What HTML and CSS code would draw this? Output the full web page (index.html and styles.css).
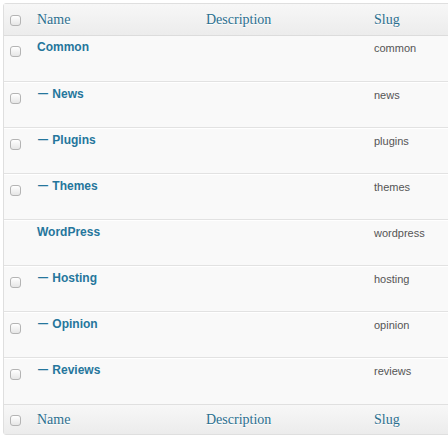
FILE: index.html
```html
<!DOCTYPE html>
<html>
<head>
<meta charset="utf-8">
<link rel="stylesheet" href="styles.css">
</head>
<body>
<div class="wrap">
<table class="list">
  <colgroup>
    <col class="c-cb"><col class="c-name"><col class="c-desc"><col class="c-slug">
  </colgroup>
  <thead>
    <tr><th class="cb"><span class="box"></span></th><th>Name</th><th>Description</th><th>Slug</th></tr>
  </thead>
  <tbody>
    <tr><td class="cb"><span class="box"></span></td><td class="name">Common</td><td></td><td class="slug">common</td></tr>
    <tr><td class="cb"><span class="box"></span></td><td class="name"><span class="dash">—</span> News</td><td></td><td class="slug">news</td></tr>
    <tr><td class="cb"><span class="box"></span></td><td class="name"><span class="dash">—</span> Plugins</td><td></td><td class="slug">plugins</td></tr>
    <tr><td class="cb"><span class="box"></span></td><td class="name"><span class="dash">—</span> Themes</td><td></td><td class="slug">themes</td></tr>
    <tr><td class="cb"></td><td class="name">WordPress</td><td></td><td class="slug">wordpress</td></tr>
    <tr><td class="cb"><span class="box"></span></td><td class="name"><span class="dash">—</span> Hosting</td><td></td><td class="slug">hosting</td></tr>
    <tr><td class="cb"><span class="box"></span></td><td class="name"><span class="dash">—</span> Opinion</td><td></td><td class="slug">opinion</td></tr>
    <tr><td class="cb"><span class="box"></span></td><td class="name"><span class="dash">—</span> Reviews</td><td></td><td class="slug">reviews</td></tr>
  </tbody>
  <tfoot>
    <tr><th class="cb"><span class="box"></span></th><th>Name</th><th>Description</th><th>Slug</th></tr>
  </tfoot>
</table>
</div>
</body>
</html>
```
FILE: styles.css
```css
html, body {
  margin: 0;
  padding: 0;
  background: #ffffff;
  overflow: hidden;
}
.wrap {
  padding: 3px 0 0 3px;
  width: 480px;
}
.list {
  border-collapse: separate;
  border-spacing: 0;
  table-layout: fixed;
  width: 470px;
  border: 1px solid #dfdfdf;
  border-radius: 3px 0 0 3px;
  background: #f9f9f9;
}
.c-cb { width: 26px; }
.c-name { width: 169px; }
.c-desc { width: 168px; }
.c-slug { width: 107px; }

th {
  font-family: "Liberation Serif", "Times New Roman", serif;
  font-weight: normal;
  font-size: 14px;
  color: #2b6f8f;
  text-align: left;
  text-shadow: 0 1px 0 #ffffff;
  height: 32px;
  padding: 0 7px;
  box-sizing: border-box;
  background: linear-gradient(#f7f7f7, #ececec);
  vertical-align: middle;
}
thead th { border-bottom: 1px solid #dcdcdc; height: 32px; }
tfoot th { border-top: 1px solid #e0e0e0; height: 30px; }

td {
  height: 46px;
  box-sizing: border-box;
  padding: 4px 7px 0 7px;
  vertical-align: top;
  border-top: 1px solid #ffffff;
  border-bottom: 1px solid #e2e2e2;
  line-height: 15px;
}
tbody tr:first-child td { border-top: none; }
tbody tr:last-child td { border-bottom: none; }

th.cb, td.cb { padding: 0 0 0 6px; }
td.cb { padding-top: 10px; }

.box {
  display: block;
  width: 9px;
  height: 9px;
  border: 1px solid #b4b4b4;
  border-radius: 3px;
  background: linear-gradient(#ffffff, #e6e6e6);
}
th .box { margin-top: 1px; }

.name {
  font-family: "Liberation Sans", Arial, sans-serif;
  font-weight: bold;
  font-size: 12px;
  color: #25769c;
  white-space: nowrap;
}
.dash {
  font-size: 10px;
  margin-left: 1px;
  margin-right: 1px;
  position: relative;
  top: -1px;
}
.slug {
  font-family: "Liberation Sans", Arial, sans-serif;
  font-size: 11px;
  color: #555555;
  padding-top: 5px;
}
```
